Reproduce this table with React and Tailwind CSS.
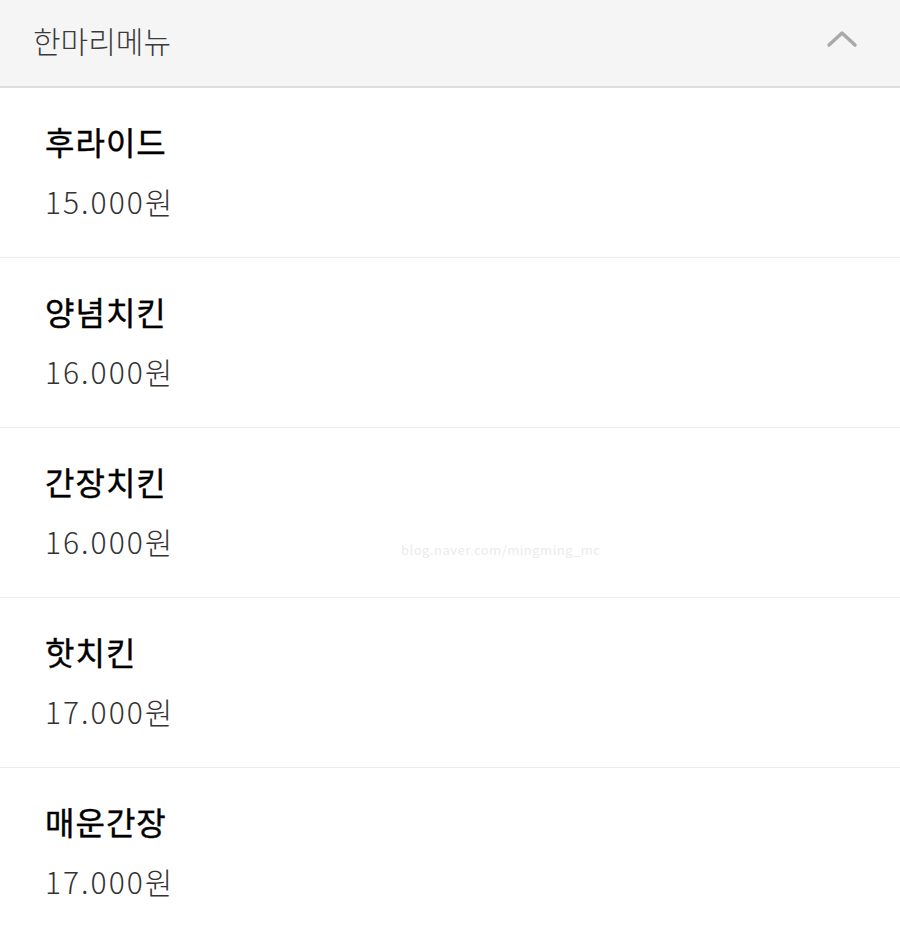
const menu = [
	{ name: "후라이드", price: "15.000원" },
	{ name: "양념치킨", price: "16.000원" },
	{ name: "간장치킨", price: "16.000원", mark: true },
	{ name: "핫치킨", price: "17.000원" },
	{ name: "매운간장", price: "17.000원" },
];

export default function App() {
	return (
		<div
			className="w-[900px] h-[936px] bg-white overflow-hidden"
			style={{ fontFamily: '"Noto Sans CJK KR", "Noto Sans", sans-serif' }}>
			{/* Section header */}
			<div className="h-[88px] bg-[#f5f5f5] border-b-2 border-[#dedede] flex items-center justify-between pl-[33px] pr-[42px]">
				<span className="text-[30px] font-light text-[#3a3a3a] tracking-[0px] leading-none pb-[6px]">
					한마리메뉴
				</span>
				<svg width="32" height="18" viewBox="0 0 32 18" className="mb-[8px]">
					<path d="M3 15 L16 3 L29 15" fill="none" stroke="#a9a9a9" strokeWidth="3.5" strokeLinecap="round" strokeLinejoin="round" />
				</svg>
			</div>

			{/* Items */}
			<div>
				{menu.map((item) => (
					<div
						key={item.name}
						className="relative h-[170px] border-b border-[#ececec] pl-[45px] pt-[33px]">
						<div className="text-[32px] font-normal text-black leading-[40px] tracking-[1px] [-webkit-text-stroke:0.4px_black]">
							{item.name}
						</div>
						<div className="mt-[20px] text-[30px] font-light text-[#333] leading-[40px] tracking-[2px]">
							{item.price}
						</div>
						{item.mark && (
							<span className="absolute left-[401px] top-[112px] text-[13px] tracking-[0.5px] text-[#ebebeb]">
								blog.naver.com/mingming_mc
							</span>
						)}
					</div>
				))}
			</div>
		</div>
	);
}
